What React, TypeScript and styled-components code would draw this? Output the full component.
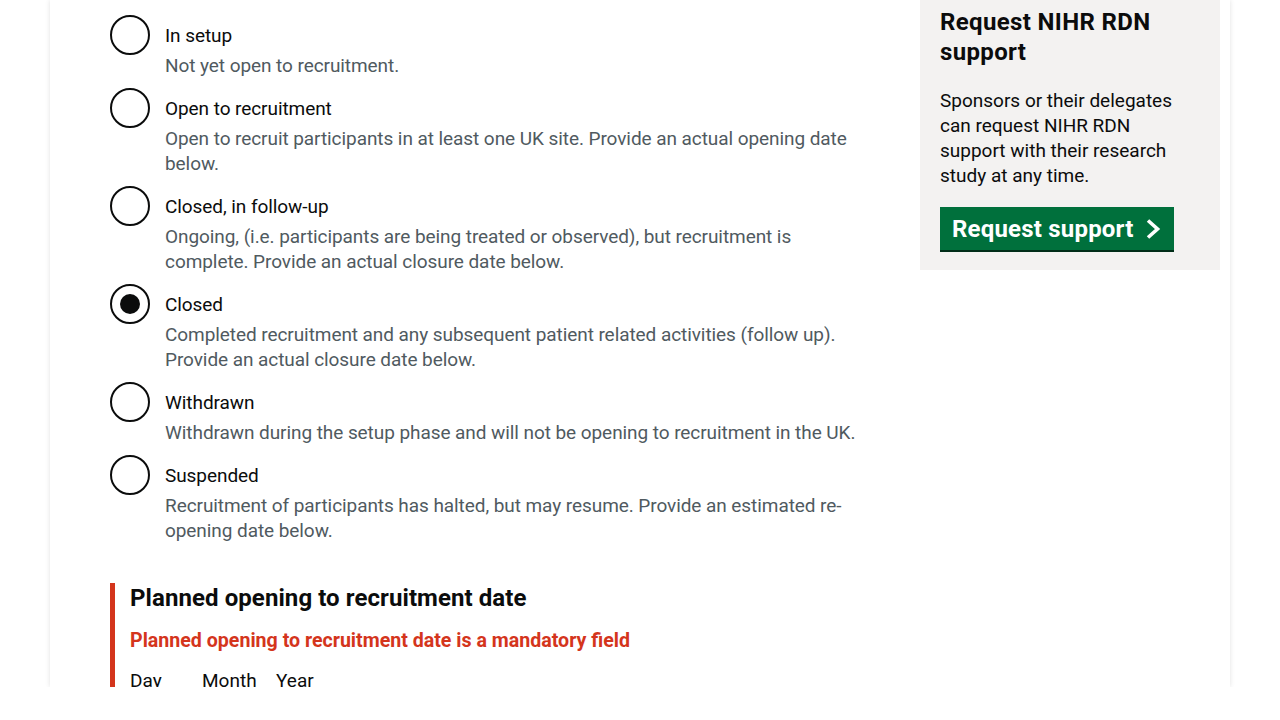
import React from "react";
import styled, { createGlobalStyle } from "styled-components";

type Status = {
  label: string;
  hint: string;
  checked?: boolean;
};

const statuses: Status[] = [
  { label: "In setup", hint: "Not yet open to recruitment." },
  {
    label: "Open to recruitment",
    hint: "Open to recruit participants in at least one UK site. Provide an actual opening date below.",
  },
  {
    label: "Closed, in follow-up",
    hint: "Ongoing, (i.e. participants are being treated or observed), but recruitment is complete. Provide an actual closure date below.",
  },
  {
    label: "Closed",
    hint: "Completed recruitment and any subsequent patient related activities (follow up). Provide an actual closure date below.",
    checked: true,
  },
  {
    label: "Withdrawn",
    hint: "Withdrawn during the setup phase and will not be opening to recruitment in the UK.",
  },
  {
    label: "Suspended",
    hint: "Recruitment of participants has halted, but may resume. Provide an estimated re-opening date below.",
  },
];

const App: React.FC = () => {
  return (
    <>
      <GlobalStyle />
      <StyledPage>
        <StyledGrid>
          <StyledMain>
            <StyledRadios>
              {statuses.map((s) => (
                <StyledRadioItem key={s.label}>
                  <StyledCircle $checked={!!s.checked} />
                  <StyledRadioText>
                    <StyledLabel>{s.label}</StyledLabel>
                    <StyledHint>{s.hint}</StyledHint>
                  </StyledRadioText>
                </StyledRadioItem>
              ))}
            </StyledRadios>

            <StyledErrorGroup>
              <StyledLegend>Planned opening to recruitment date</StyledLegend>
              <StyledError>
                Planned opening to recruitment date is a mandatory field
              </StyledError>
              <StyledDateRow>
                <StyledDateItem $width={52}>Day</StyledDateItem>
                <StyledDateItem $width={54}>Month</StyledDateItem>
                <StyledDateItem $width={80}>Year</StyledDateItem>
              </StyledDateRow>
            </StyledErrorGroup>
          </StyledMain>

          <StyledAside>
            <StyledAsideTitle>Request NIHR RDN support</StyledAsideTitle>
            <StyledAsideText>
              Sponsors or their delegates can request NIHR RDN support with
              their research study at any time.
            </StyledAsideText>
            <StyledButton>
              Request support
              <svg width="16" height="20" viewBox="0 0 16 20" aria-hidden="true">
                <path
                  d="M3 1.5 L12.5 10 L3 18.5"
                  fill="none"
                  stroke="#ffffff"
                  strokeWidth="3.6"
                />
              </svg>
            </StyledButton>
          </StyledAside>
        </StyledGrid>
      </StyledPage>
    </>
  );
};

//Styled-Components
const GlobalStyle = createGlobalStyle`
  body {
    margin: 0;
    background: #ffffff;
    font-family: Roboto, "Liberation Sans", Arial, sans-serif;
    color: #0b0c0c;
  }
`;

const StyledPage = styled.div`
  margin: 0 50px;
  height: 687px;
  overflow: hidden;
  background: #ffffff;
  box-shadow: 0 0 5px rgba(0, 0, 0, 0.12);
`;

const StyledGrid = styled.div`
  display: grid;
  grid-template-columns: 760px 300px;
  column-gap: 50px;
  padding-left: 60px;
  align-items: start;
`;

const StyledMain = styled.div`
  display: flex;
  flex-direction: column;
  padding-top: 15px;
`;

const StyledRadios = styled.div`
  display: flex;
  flex-direction: column;
  gap: 10px;
`;

const StyledRadioItem = styled.div`
  display: flex;
  align-items: flex-start;
`;

const StyledCircle = styled.span<{ $checked: boolean }>`
  flex: 0 0 40px;
  width: 40px;
  height: 40px;
  box-sizing: border-box;
  border: 2px solid #0b0c0c;
  border-radius: 50%;
  display: grid;
  place-items: center;
  &::after {
    content: "";
    width: 20px;
    height: 20px;
    border-radius: 50%;
    background: #0b0c0c;
    display: ${(p) => (p.$checked ? "block" : "none")};
  }
`;

const StyledRadioText = styled.div`
  display: flex;
  flex-direction: column;
  padding-left: 15px;
  letter-spacing: -0.07px;
`;

const StyledLabel = styled.span`
  font-size: 19px;
  line-height: 25px;
  padding: 8px 0 5px;
  color: #0b0c0c;
`;

const StyledHint = styled.span`
  font-size: 19px;
  line-height: 25px;
  color: #505a5f;
`;

const StyledErrorGroup = styled.div`
  margin-top: 40px;
  border-left: 5px solid #d4351c;
  padding-left: 15px;
  display: flex;
  flex-direction: column;
`;

const StyledLegend = styled.h2`
  margin: 0;
  font-size: 24px;
  line-height: 30px;
  font-weight: 700;
  letter-spacing: 0.08px;
`;

const StyledError = styled.p`
  margin: 15px 0 0;
  font-size: 19.6px;
  line-height: 25px;
  font-weight: 700;
  color: #d4351c;
`;

const StyledDateRow = styled.div`
  display: flex;
  gap: 20px;
  margin-top: 15px;
`;

const StyledDateItem = styled.label<{ $width: number }>`
  width: ${(p) => p.$width}px;
  font-size: 19px;
  line-height: 25px;
  color: #0b0c0c;
`;

const StyledAside = styled.aside`
  background: #f3f2f1;
  padding: 7px 20px 20px;
  display: flex;
  flex-direction: column;
  align-items: flex-start;
`;

const StyledAsideTitle = styled.h2`
  margin: 0;
  font-size: 24px;
  line-height: 30px;
  font-weight: 700;
  letter-spacing: 0.35px;
  color: #0b0c0c;
`;

const StyledAsideText = styled.p`
  margin: 21px 0 0;
  font-size: 19px;
  line-height: 25px;
  color: #0b0c0c;
`;

const StyledButton = styled.a`
  margin-top: 19px;
  display: inline-flex;
  align-items: center;
  gap: 11px;
  height: 43px;
  padding: 0 13px 0 12px;
  background: #00703c;
  box-shadow: 0 2px 0 #002d18;
  color: #ffffff;
  font-size: 24px;
  font-weight: 700;
  letter-spacing: 0.2px;
  cursor: pointer;
`;

export default App;
